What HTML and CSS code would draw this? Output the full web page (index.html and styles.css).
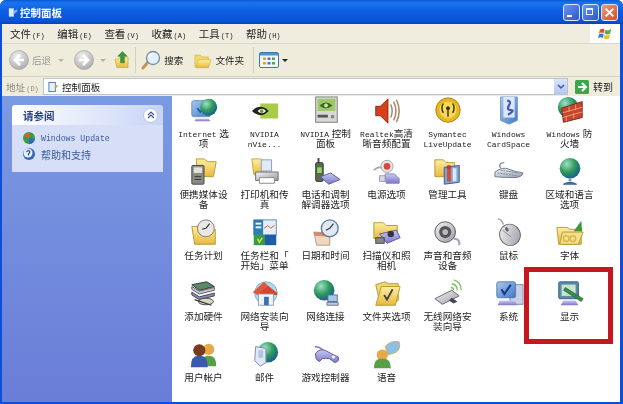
FILE: index.html
```html
<!DOCTYPE html>
<html lang="zh-CN">
<head>
    <meta charset="UTF-8">
    <meta name="viewport" content="width=device-width, initial-scale=1.0">
    <title>控制面板</title>
    <link rel="stylesheet" href="styles.css">
</head>
<body>
    <svg class="defs" width="0" height="0">
        <defs>
            <linearGradient id="gScreen" x1="0" y1="0" x2="1" y2="1"><stop offset="0" stop-color="#a9c9ee"/><stop offset="1" stop-color="#3f78c8"/></linearGradient>
            <linearGradient id="gFolder" x1="0" y1="0" x2="0" y2="1"><stop offset="0" stop-color="#fdeea0"/><stop offset="1" stop-color="#e8b93e"/></linearGradient>
            <radialGradient id="gGlobe" cx=".35" cy=".3" r=".8"><stop offset="0" stop-color="#9fe0c8"/><stop offset=".5" stop-color="#2f9a5a"/><stop offset="1" stop-color="#14509a"/></radialGradient>
            <linearGradient id="gGrey" x1="0" y1="0" x2="1" y2="1"><stop offset="0" stop-color="#f4f4f4"/><stop offset="1" stop-color="#9a9aa6"/></linearGradient>
            <linearGradient id="gPurple" x1="0" y1="0" x2="0" y2="1"><stop offset="0" stop-color="#c8c8f0"/><stop offset="1" stop-color="#7a78c8"/></linearGradient>
            <radialGradient id="gBack" cx=".4" cy=".3" r=".8"><stop offset="0" stop-color="#f0f0f0"/><stop offset="1" stop-color="#a6a6a6"/></radialGradient>
        </defs>
    </svg>

    <div class="window">
        <div class="titlebar">
            <svg class="title-icon" viewBox="0 0 12 12"><path d="M1 1h6v10H1z" fill="#dfe8f5"/><path d="M7 4l4-2v3l-4 3z" fill="#7fb0e8"/></svg>
            <span class="title-text">控制面板</span>
            <div class="caption">
                <div class="cap-btn cap-blue"><i class="cap-min"></i></div>
                <div class="cap-btn cap-blue"><i class="cap-max"></i></div>
                <div class="cap-btn cap-close">
                    <svg viewBox="0 0 10 10"><path d="M1.5 1.5l7 7M8.5 1.5l-7 7" stroke="#fff" stroke-width="1.8"/></svg>
                </div>
            </div>
        </div>

        <div class="menubar">
            <span class="menu-item">文件<span class="lat">(F)</span></span>
            <span class="menu-item">编辑<span class="lat">(E)</span></span>
            <span class="menu-item">查看<span class="lat">(V)</span></span>
            <span class="menu-item">收藏<span class="lat">(A)</span></span>
            <span class="menu-item">工具<span class="lat">(T)</span></span>
            <span class="menu-item">帮助<span class="lat">(H)</span></span>
            <div class="flag">
                <svg viewBox="0 0 16 16"><path d="M2 4q3-2 5 0l-1 4q-2-2-5 0z" fill="#d8502c"/><path d="M8 4q3 2 6-1l-1 5q-3 2-6 0z" fill="#62a83c"/><path d="M1 9q3-2 5 0l-1 4q-2-2-5 0z" fill="#3c78c8"/><path d="M7 9q3 2 6 0l-1 4q-3 2-6 0z" fill="#eebc2c"/></svg>
            </div>
        </div>

        <div class="toolbar">
            <svg class="nav-btn" viewBox="0 0 20 20"><circle cx="10" cy="10" r="9.5" fill="url(#gBack)" stroke="#9c9c9c" stroke-width=".6"/><path d="M11 5l-5 5 5 5M6 10h9" fill="none" stroke="#fff" stroke-width="2.6"/></svg>
            <span class="tool-text muted back-label">后退</span>
            <span class="drop grey first-drop"></span>
            <svg class="nav-btn forward" viewBox="0 0 20 20"><circle cx="10" cy="10" r="9.5" fill="url(#gBack)" stroke="#9c9c9c" stroke-width=".6"/><path d="M9 5l5 5-5 5M14 10H5" fill="none" stroke="#fff" stroke-width="2.6"/></svg>
            <span class="drop grey second-drop"></span>
            <svg class="up-btn" viewBox="0 0 16 20"><path d="M1 9h4l1-2h9v11H3z" fill="url(#gFolder)" stroke="#c09a30" stroke-width=".6"/><path d="M9 1l5 5h-3v7H7V6H4z" fill="#3a9a3a" stroke="#1f6f24" stroke-width=".5"/></svg>
            <span class="tool-sep"></span>
            <svg class="search-btn" viewBox="0 0 20 20"><path d="M7 12l-5 6" stroke="#c8925a" stroke-width="3" stroke-linecap="round"/><circle cx="12" cy="8" r="6.5" fill="#e4f1fb" stroke="#6c8fb0" stroke-width="1.3"/><path d="M8 7q1-3 4-3.500" stroke="#fff" stroke-width="1.4" fill="none"/></svg>
            <span class="tool-text search-label">搜索</span>
            <svg class="folder-btn" viewBox="0 0 20 18"><path d="M1 3h6l2 2h7v11H1z" fill="#f2d66e" stroke="#c8a83a" stroke-width=".6"/><path d="M5 8h14l-3 9H2z" fill="url(#gFolder)" stroke="#c8a83a" stroke-width=".6"/></svg>
            <span class="tool-text folder-label">文件夹</span>
            <span class="tool-sep sep-two"></span>
            <svg class="view-btn" viewBox="0 0 20 16"><rect x=".5" y=".5" width="19" height="15" rx="1.500" fill="#f4f6fa" stroke="#3d78a8"/><rect x="1" y="1" width="18" height="2.500" fill="#4f94c8"/><g fill="#e0a030"><rect x="4" y="5.500" width="3" height="2.500"/><rect x="4" y="10" width="3" height="2.500"/></g><g fill="#4a7ab8"><rect x="8.500" y="5.500" width="3" height="2.500"/><rect x="8.500" y="10" width="3" height="2.500"/></g><g fill="#58a048"><rect x="13" y="5.500" width="3" height="2.500"/><rect x="13" y="10" width="3" height="2.500"/></g></svg>
            <span class="drop"></span>
        </div>

        <div class="addressbar">
            <span class="addr-label">地址<span class="lat">(D)</span></span>
            <div class="addr-input">
                <svg class="addr-icon" viewBox="0 0 12 12"><rect x="1" y="1" width="7" height="10" fill="#e8f0fa" stroke="#3f78b8"/><path d="M8 3l3 2-3 3z" fill="#e0a030"/></svg>
                <span class="addr-text">控制面板</span>
                <div class="addr-drop"><svg viewBox="0 0 8 6"><path d="M1 1l3 3 3-3" fill="none" stroke="#3d5a9a" stroke-width="1.500"/></svg></div>
            </div>
            <svg class="go-icon" viewBox="0 0 14 14"><rect width="14" height="14" rx="1.500" fill="#3aa84a"/><path d="M3 7h7M7 3l4 4-4 4" fill="none" stroke="#fff" stroke-width="2"/></svg>
            <span class="go-text">转到</span>
        </div>

        <div class="main">
            <aside class="sidebar">
                <section class="task-box">
                    <header class="task-head">
                        <span>请参阅</span>
                        <span class="collapse">
                            <svg viewBox="0 0 8 8"><path d="M1 4l3-3 3 3M1 7l3-3 3 3" fill="none" stroke="#3a4f8a" stroke-width="1.100"/></svg>
                        </span>
                    </header>
                    <div class="task-body">
                        <div class="task-link">
                            <svg viewBox="0 0 14 14"><circle cx="7" cy="7" r="6" fill="#3c9a48"/><path d="M2 5q3-4 6-3l-1 5z" fill="#d8602c"/><path d="M7 7l6 1q-1 5-6 5z" fill="#2f6cc0"/></svg>
                            <span class="lat link-lat">Windows Update</span>
                        </div>
                        <div class="task-link">
                            <svg viewBox="0 0 14 14"><circle cx="7" cy="7" r="6" fill="#3566b8"/><circle cx="6" cy="6" r="4.500" fill="#e8eefa"/><path d="M4.500 5q1.500-2.500 3.200-.6Q8 6 6.500 7v1.500" fill="none" stroke="#2a4f9a" stroke-width="1.200"/></svg>
                            <span>帮助和支持</span>
                        </div>
                    </div>
                </section>
            </aside>

            <div class="content">
                <div class="item">
                    <svg viewBox="0 0 32 32"><rect x="3" y="5" width="20" height="17" rx="2" fill="url(#gScreen)" stroke="#6f8fb8"/><path d="M9 13l3 4 6-8" fill="none" stroke="#1f5aa0" stroke-width="2"/><circle cx="21" cy="12" r="9" fill="url(#gGlobe)"/><path d="M7 24h14l2 3H6z" fill="url(#gPurple)"/></svg>
                    <p><span class="lat">Internet</span> 选<br>项</p>
                </div>
                <div class="item">
                    <svg viewBox="0 0 32 32"><rect x="11" y="8" width="19" height="16" fill="#a8cc48"/><path d="M2 16q9-9 18 0-9 9-18 0z" fill="#222"/><path d="M8 16q5-5 9 0-4 5-9 0z" fill="#fff"/><circle cx="12.500" cy="16" r="2" fill="#6a9a28"/></svg>
                    <p><span class="lat">NVIDIA</span><br><span class="lat">nVie...</span></p>
                </div>
                <div class="item">
                    <svg viewBox="0 0 32 32"><rect x="5" y="1" width="23" height="27" fill="#d8d8d4" stroke="#7a7a78"/><rect x="7" y="3" width="19" height="13" fill="#9cc86a"/><path d="M9 10q7-6 14 0-7 6-14 0z" fill="#3a6a28"/><circle cx="16" cy="10" r="2" fill="#cfe8a0"/><rect x="7" y="20" width="11" height="3" fill="#555"/><circle cx="23" cy="22" r="2" fill="#888"/></svg>
                    <p><span class="lat">NVIDIA</span> 控制<br>面板</p>
                </div>
                <div class="item">
                    <svg viewBox="0 0 32 32"><path d="M4 11h5l8-8v26l-8-8H4z" fill="#d8401c" stroke="#8a2810"/><path d="M20 9q3 7 0 14M23 6q5 10 0 20M26 4q6 12 0 24" fill="none" stroke="#a88868" stroke-width="1.600"/></svg>
                    <p><span class="lat">Realtek</span>高清<br>晰音频配置</p>
                </div>
                <div class="item">
                    <svg viewBox="0 0 32 32"><circle cx="16" cy="15" r="13" fill="#e8b820" stroke="#a87c10"/><circle cx="16" cy="15" r="9" fill="#f4d860"/><circle cx="16" cy="13" r="2" fill="#3a3010"/><path d="M16 14v8M11 8q-3 5 0 10M21 8q3 5 0 10" fill="none" stroke="#3a3010" stroke-width="1.500"/></svg>
                    <p><span class="lat">Symantec</span><br><span class="lat">LiveUpdate</span></p>
                </div>
                <div class="item">
                    <svg viewBox="0 0 32 32"><path d="M7 1h18v25l-9 4-9-4z" fill="url(#gScreen)" stroke="#7a98c8"/><path d="M10 1h12v22H10z" fill="#dce8f8"/><path d="M14 5q5 0 2 5t2 5-3 5" fill="none" stroke="#4a5ab0" stroke-width="2.400"/></svg>
                    <p><span class="lat">Windows</span><br><span class="lat">CardSpace</span></p>
                </div>
                <div class="item">
                    <svg viewBox="0 0 32 32"><circle cx="14" cy="12" r="11" fill="url(#gGlobe)"/><path d="M7 13l22-7v17L9 28z" fill="#c8442a" stroke="#7a2414"/><path d="M8 18l21-6M8 23l21-6M15 11v6M22 9v6M12 21v6M20 18v6" stroke="#e8a080" fill="none"/></svg>
                    <p><span class="lat">Windows</span> 防<br>火墙</p>
                </div>

                <div class="item">
                    <svg viewBox="0 0 32 32"><path d="M8 2h8l4 3h9l-3 16H8z" fill="url(#gFolder)" stroke="#b89830"/><rect x="3" y="9" width="13" height="20" rx="1" fill="#8a8a86" stroke="#444"/><rect x="5" y="11" width="9" height="6" fill="#dfe8d8"/><path d="M6 21h7M6 24h7" stroke="#333"/></svg>
                    <p>便携媒体设<br>备</p>
                </div>
                <div class="item">
                    <svg viewBox="0 0 32 32"><path d="M2 2h10l3 3v14H4z" fill="url(#gFolder)" stroke="#c8a83a"/><path d="M12 3h11v12H12z" fill="#dfeaf6" stroke="#8a9ab8"/><path d="M6 16h24v9H6z" fill="url(#gGrey)" stroke="#6a6a72"/><path d="M10 22h16v6H10z" fill="#fff" stroke="#888"/></svg>
                    <p>打印机和传<br>真</p>
                </div>
                <div class="item">
                    <svg viewBox="0 0 32 32"><rect x="7" y="1" width="2" height="6" fill="#444"/><rect x="5" y="6" width="8" height="20" rx="1.500" fill="#5a6a4c" stroke="#333"/><rect x="6.500" y="11" width="5" height="6" fill="#8cd868"/><path d="M10 21l11-4 10 7-12 5z" fill="url(#gPurple)" stroke="#5a58a0"/></svg>
                    <p>电话和调制<br>解调器选项</p>
                </div>
                <div class="item">
                    <svg viewBox="0 0 32 32"><path d="M2 14q6-6 11 0" fill="none" stroke="#a8a8b8" stroke-width="2"/><circle cx="16" cy="10" r="6.500" fill="#e8e4e4" stroke="#a8a0a8"/><circle cx="16" cy="10" r="3.500" fill="#d84838"/><path d="M14 18h10l5 5v5H15z" fill="url(#gPurple)" stroke="#8888c0"/><path d="M8 20h6v6H8z" fill="#d8d8e8" stroke="#9898b0"/></svg>
                    <p>电源选项</p>
                </div>
                <div class="item">
                    <svg viewBox="0 0 32 32"><path d="M2 3h9l3 3h9v15H2z" fill="url(#gFolder)" stroke="#b89830"/><path d="M12 11l16-2v18l-16 2z" fill="#7ea4d0" stroke="#3a5a8a"/><rect x="15" y="13" width="4" height="13" fill="#d84a34"/><rect x="21" y="12" width="4" height="14" fill="#dce8f8"/><circle cx="17" cy="11" r="2.500" fill="#c83a28"/></svg>
                    <p>管理工具</p>
                </div>
                <div class="item">
                    <svg viewBox="0 0 32 32"><path d="M7 12q-3-6 4-6" fill="none" stroke="#808890" stroke-width="1.400"/><path d="M1 16q8-6 15-3t15 4q-1 5-10 5T1 21z" fill="url(#gGrey)" stroke="#6a7a90"/><path d="M4 17l20 3M7 14l19 3" stroke="#6a8ab0" stroke-dasharray="2 1" fill="none"/></svg>
                    <p>键盘</p>
                </div>
                <div class="item">
                    <svg viewBox="0 0 32 32"><circle cx="16" cy="12" r="11" fill="url(#gGlobe)"/><path d="M16 23v3" stroke="#7a98b8" stroke-width="3"/><path d="M9 29q7-4 14 0z" fill="#4a7ab8" stroke="#2a5a90"/></svg>
                    <p>区域和语言<br>选项</p>
                </div>

                <div class="item">
                    <svg viewBox="0 0 32 32"><path d="M3 9h10l3 3h12v16H6z" fill="url(#gFolder)" stroke="#b89830"/><circle cx="18" cy="11" r="9" fill="#e8e8e0" stroke="#7a7a78"/><path d="M18 11l4-5M18 11l-4 1" stroke="#333" stroke-width="1.200"/></svg>
                    <p>任务计划</p>
                </div>
                <div class="item">
                    <svg viewBox="0 0 32 32"><rect x="4" y="2" width="24" height="16" fill="#e4f0f8" stroke="#5a8ab0"/><rect x="4" y="2" width="10" height="16" fill="#2d7eb8"/><rect x="6" y="5" width="6" height="2" fill="#fff"/><rect x="6" y="9" width="6" height="2" fill="#fff"/><path d="M15 11l4-3 3 3 4-3" fill="none" stroke="#d84a34"/><rect x="4" y="18" width="12" height="11" fill="#3a9a48"/><rect x="16" y="18" width="12" height="11" fill="#1f5ca8"/><path d="M8 22l2 4 3-5" stroke="#d8e840" fill="none" stroke-width="1.500"/></svg>
                    <p>任务栏和「<br>开始」菜单</p>
                </div>
                <div class="item">
                    <svg viewBox="0 0 32 32"><path d="M3 15l17 1v13H6z" fill="#f0d8c0" stroke="#b89880"/><path d="M3 15l17 1v4L4 19z" fill="#d88868"/><circle cx="20" cy="11" r="9" fill="#dfe8f4" stroke="#5a7a9a" stroke-width="1.400"/><path d="M20 11l4-5M20 11l-4 2" stroke="#333" stroke-width="1.200"/></svg>
                    <p>日期和时间</p>
                </div>
                <div class="item">
                    <svg viewBox="0 0 32 32"><path d="M2 5h10l3 3h12v14H2z" fill="url(#gFolder)" stroke="#b89830"/><path d="M8 17l18-4 4 8-14 6z" fill="url(#gPurple)" stroke="#5a58a0"/><circle cx="20" cy="17" r="3.500" fill="#334"/><rect x="4" y="21" width="9" height="6" fill="#888" stroke="#444"/></svg>
                    <p>扫描仪和照<br>相机</p>
                </div>
                <div class="item">
                    <svg viewBox="0 0 32 32"><path d="M22 22q7 0 6 7" fill="none" stroke="#a0a8c8" stroke-width="2.400"/><circle cx="13" cy="15" r="11" fill="url(#gGrey)" stroke="#555"/><circle cx="13" cy="15" r="6.500" fill="#555"/><circle cx="13" cy="15" r="3" fill="#bbb"/></svg>
                    <p>声音和音频<br>设备</p>
                </div>
                <div class="item">
                    <svg viewBox="0 0 32 32"><path d="M4 1q4 0 6 6" fill="none" stroke="#9098a0" stroke-width="1.400"/><ellipse cx="17" cy="18" rx="11" ry="11.500" fill="url(#gGrey)" stroke="#666" transform="rotate(-25 17 18)"/><path d="M9 13l9 7" stroke="#888"/><rect x="12" y="10" width="3" height="5" rx="1.500" fill="#666" transform="rotate(-35 13 12)"/></svg>
                    <p>鼠标</p>
                </div>
                <div class="item">
                    <svg viewBox="0 0 32 32"><path d="M2 10h11l3 2h12v16H4z" fill="url(#gFolder)" stroke="#b89830"/><path d="M5 28l3-13h22l-5 13z" fill="#f4e08a" stroke="#b89830"/><path d="M20 14l8-11 1 11z" fill="#3a9a3a"/><circle cx="12" cy="22" r="3" fill="none" stroke="#d8b848" stroke-width="1.500"/><circle cx="19" cy="22" r="3" fill="none" stroke="#d8b848" stroke-width="1.500"/></svg>
                    <p>字体</p>
                </div>

                <div class="item">
                    <svg viewBox="0 0 32 32"><path d="M3 6l16-3 8 5-16 4z" fill="#5a8a6a" stroke="#333"/><path d="M3 8l8 5 16-4v3l-16 4-8-5z" fill="#c8c8d8" stroke="#555"/><path d="M3 14l8 5 16-4v3l-16 4-8-5z" fill="#8a88c0" stroke="#444"/><ellipse cx="18" cy="24" rx="8" ry="3.500" fill="#d8d8c0" stroke="#444"/><path d="M6 22l18 6" stroke="#333" stroke-width="1.400"/></svg>
                    <p>添加硬件</p>
                </div>
                <div class="item">
                    <svg viewBox="0 0 32 32"><circle cx="17" cy="15" r="12" fill="#9ad0e8" stroke="#6a9ab8" opacity=".8"/><path d="M9 15l10-8 10 8v2H9z" fill="#d8452c"/><path d="M3 14L15 3l4 4L8 17z" fill="#e0583c"/><path d="M9 16h16v12H9z" fill="#f0f4f8" stroke="#8aa0b8"/><rect x="15" y="19" width="5" height="9" fill="#3a70b0"/></svg>
                    <p>网络安装向<br>导</p>
                </div>
                <div class="item">
                    <svg viewBox="0 0 32 32"><circle cx="14" cy="12" r="11" fill="url(#gGlobe)"/><rect x="18" y="17" width="10" height="7" fill="#a8c8e8" stroke="#50709a"/><path d="M17 25h12v3H17z" fill="#c0c8e0" stroke="#6a7a9a"/></svg>
                    <p>网络连接</p>
                </div>
                <div class="item">
                    <svg viewBox="0 0 32 32"><path d="M4 6l10-3 3 2 11 0v18L9 28z" fill="#f0d870" stroke="#b89830"/><path d="M10 8h20l-5 20H4z" fill="url(#gFolder)" stroke="#b89830"/><path d="M13 17l3 5 6-11" fill="none" stroke="#444" stroke-width="2"/></svg>
                    <p>文件夹选项</p>
                </div>
                <div class="item">
                    <svg viewBox="0 0 32 32"><path d="M2 21l18-9 8 6-18 9z" fill="url(#gGrey)" stroke="#666"/><path d="M20 20l6 4-4 2-5-3z" fill="#445"/><path d="M19 9q3 0 3 3M20 5q6 1 6 7M22 1q8 2 8 11" fill="none" stroke="#7cc060" stroke-width="1.500"/></svg>
                    <p>无线网络安<br>装向导</p>
                </div>
                <div class="item">
                    <svg viewBox="0 0 32 32"><rect x="17" y="6" width="14" height="21" fill="#c8d0e8" stroke="#7a88a8"/><rect x="3" y="3" width="20" height="17" rx="2" fill="url(#gScreen)" stroke="#5a7aa8"/><path d="M8 11l3 5 7-10" fill="none" stroke="#163a88" stroke-width="2.200"/><path d="M6 23h16l3 5H4z" fill="url(#gPurple)"/></svg>
                    <p>系统</p>
                </div>
                <div class="item">
                    <svg viewBox="0 0 32 32"><rect x="4" y="3" width="21" height="18" rx="1.500" fill="#5a8aa8" stroke="#3a6078"/><rect x="7" y="6" width="15" height="12" fill="#c8e4d0"/><path d="M11 9l19 12-2 3L9 12z" fill="#3a8a48" stroke="#1f5a28" stroke-width=".6"/><path d="M9 23h13l3 5H6z" fill="url(#gPurple)"/></svg>
                    <p>显示</p>
                </div>

                <div class="item">
                    <svg viewBox="0 0 32 32"><circle cx="21" cy="10" r="6" fill="#e8a848"/><path d="M13 28q0-12 8-11 8-1 8 11z" fill="#58a048"/><circle cx="11" cy="11" r="6.500" fill="#7a3a20"/><path d="M2 29q0-13 9-12 9-1 9 12z" fill="#3a5ab0"/></svg>
                    <p>用户帐户</p>
                </div>
                <div class="item">
                    <svg viewBox="0 0 32 32"><circle cx="19" cy="13" r="11" fill="url(#gGlobe)"/><path d="M6 7l11 2v15l-6 4-6-6z" fill="#dfe8f8" stroke="#7a8ab0"/><path d="M9 11h5v8H9z" fill="#b0c4e0"/></svg>
                    <p>邮件</p>
                </div>
                <div class="item">
                    <svg viewBox="0 0 32 32"><path d="M4 7q5 0 9 4" fill="none" stroke="#8a88b8" stroke-width="2"/><path d="M5 14q5-6 12-2t12 6q2 5-4 6l-5-4q-5-1-8 0l-3 3q-5-2-4-9z" fill="url(#gPurple)" stroke="#5a58a0"/><circle cx="24" cy="18" r="1.600" fill="#fff"/></svg>
                    <p>游戏控制器</p>
                </div>
                <div class="item">
                    <svg viewBox="0 0 32 32"><path d="M14 7q6-7 15-5 2 7-3 11l-9 3-1-3z" fill="#88c0e8" stroke="#d8b040"/><circle cx="11" cy="16" r="6" fill="#e8a848"/><path d="M2 30q0-11 9-10 9-1 9 10z" fill="#58a048"/></svg>
                    <p>语音</p>
                </div>
            </div>
            <div class="highlight"></div>
        </div>
    </div>
</body>
</html>
```

FILE: styles.css
```css
html, body {
    margin: 0;
    padding: 0;
}
body {
    width: 623px;
    height: 404px;
    overflow: hidden;
    background-color: #fff;
    font-family: "Noto Sans CJK SC", sans-serif;
    font-size: 10px;
    color: #222;
}
.defs {
    display: block;
}
.lat {
    font-family: "Liberation Mono", monospace;
    font-size: 8px;
    line-height: 0;
}

/* window frame */
.window {
    width: 623px;
    height: 404px;
    box-sizing: border-box;
    display: flex;
    flex-direction: column;
    padding: 0 3px 2px 2px;
    background-color: #0a50d8;
    border-radius: 6px 6px 0 0;
    filter: blur(0.4px);
}
.titlebar {
    height: 24px;
    margin: 0 -3px 0 -2px;
    padding: 1px 5px 0 8px;
    box-sizing: border-box;
    display: flex;
    align-items: center;
    background: linear-gradient(#0a58d8, #1a74ec 12%, #0b5be0 50%, #0a54d8 85%, #0444c0);
    border-radius: 6px 6px 0 0;
}
.title-icon {
    width: 10px;
    height: 11px;
    margin-right: 2px;
}
.title-text {
    color: #fff;
    font-weight: bold;
    font-size: 10.5px;
}
.caption {
    margin-left: auto;
    display: flex;
    gap: 2px;
}
.cap-btn {
    width: 17px;
    height: 17px;
    box-sizing: border-box;
    border: 1px solid #dfe8fa;
    border-radius: 3px;
    position: relative;
}
.cap-blue {
    background: linear-gradient(135deg, #6c94ee, #2a58cc);
}
.cap-close {
    background: linear-gradient(135deg, #ee9a78, #d0502c);
}
.cap-close svg {
    display: block;
    width: 11px;
    height: 11px;
    margin: 2px;
}
.cap-min {
    position: absolute;
    left: 3px;
    bottom: 3px;
    width: 5px;
    height: 2px;
    background-color: #fff;
}
.cap-max {
    position: absolute;
    left: 3px;
    top: 3px;
    width: 7px;
    height: 7px;
    box-sizing: border-box;
    border: 1px solid #e8f0fc;
    border-top-width: 2px;
}

/* menu */
.menubar {
    height: 20px;
    display: flex;
    align-items: center;
    padding-left: 8px;
    background-color: #f0ede0;
    border-bottom: 1px solid #dcd8c8;
    box-sizing: border-box;
}
.menu-item {
    width: 47.2px;
    flex: none;
    font-size: 10.5px;
}
.menu-item .lat {
    font-size: 7px;
    margin-left: 1px;
}
.flag {
    margin-left: auto;
    width: 30px;
    height: 19px;
    background-color: #fff;
    display: flex;
    align-items: center;
    justify-content: center;
}
.flag svg {
    width: 15px;
    height: 15px;
}

/* toolbar */
.toolbar {
    height: 33px;
    display: flex;
    align-items: center;
    padding-left: 7px;
    background-color: #efecdc;
    border-bottom: 1px solid #d4d0c0;
    box-sizing: border-box;
}
.nav-btn {
    width: 20px;
    height: 20px;
    flex: none;
}
.forward {
    margin-left: 10px;
}
.tool-text {
    flex: none;
    font-size: 9.6px;
}
.muted {
    color: #9a9a94;
}
.back-label {
    margin-left: 3px;
}
.drop {
    width: 0;
    height: 0;
    flex: none;
    margin-left: 3px;
    border: 3px solid transparent;
    border-top: 3px solid #222;
    border-bottom: 0;
}
.drop.grey {
    border-top-color: #b4b4ac;
}
.first-drop {
    margin-left: 7px;
}
.second-drop {
    margin-left: 6px;
}
.up-btn {
    width: 15px;
    height: 20px;
    flex: none;
    margin-left: 8px;
}
.tool-sep {
    width: 1px;
    height: 26px;
    flex: none;
    margin: 0 5px 0 6px;
    background-color: #d4d0bc;
}
.search-btn {
    width: 20px;
    height: 20px;
    flex: none;
}
.search-label {
    margin-left: 3px;
}
.folder-btn {
    width: 18px;
    height: 17px;
    flex: none;
    margin-left: 11px;
}
.folder-label {
    margin-left: 3px;
}
.sep-two {
    margin-left: 9px;
}
.view-btn {
    width: 20px;
    height: 16px;
    flex: none;
}

/* address */
.addressbar {
    height: 19px;
    display: flex;
    align-items: center;
    padding-left: 4px;
    background-color: #efecdc;
    box-sizing: border-box;
}
.addr-label {
    width: 37px;
    color: #8a8a84;
    flex: none;
    font-size: 9.6px;
}
.addr-label .lat {
    font-size: 7px;
    margin-left: 1px;
}
.addr-input {
    width: 525px;
    height: 17px;
    flex: none;
    box-sizing: border-box;
    display: flex;
    align-items: center;
    padding-left: 4px;
    background-color: #fff;
    border: 1px solid #b8c4d0;
    font-size: 9.6px;
}
.addr-icon {
    width: 11px;
    height: 12px;
    margin-right: 3px;
}
.addr-drop {
    margin-left: auto;
    width: 13px;
    height: 15px;
    display: flex;
    align-items: center;
    justify-content: center;
    background: linear-gradient(#d8e4fa, #b4c8f0);
}
.addr-drop svg {
    width: 8px;
    height: 6px;
}
.go-icon {
    width: 14px;
    height: 14px;
    flex: none;
    margin-left: 7px;
}
.go-text {
    margin-left: 4px;
    flex: none;
}

/* main area */
.main {
    flex: 1;
    display: flex;
    position: relative;
    min-height: 0;
    background-color: #fff;
}
.sidebar {
    width: 170px;
    flex: none;
    box-sizing: border-box;
    padding: 9px 9px 0 10px;
    background: linear-gradient(#7a9ae2, #6a7dd8);
}
.task-head {
    height: 20px;
    display: flex;
    align-items: center;
    justify-content: space-between;
    padding: 0 5px 0 11px;
    border-radius: 3px 3px 0 0;
    background: linear-gradient(90deg, #fff, #c8d4f6);
    color: #25408a;
    font-weight: bold;
    font-size: 10.5px;
}
.collapse {
    width: 13px;
    height: 13px;
    border-radius: 50%;
    background-color: #fff;
    border: 1px solid #b8c4e4;
    display: flex;
    align-items: center;
    justify-content: center;
}
.collapse svg {
    width: 8px;
    height: 8px;
}
.task-body {
    height: 47px;
    box-sizing: border-box;
    padding: 5px 0 0 10px;
    background-color: #d6dff7;
}
.task-link {
    height: 16px;
    display: flex;
    align-items: center;
    gap: 5px;
    color: #3a5a9a;
}
.task-link svg {
    width: 14px;
    height: 14px;
    flex: none;
}
.link-lat {
    font-size: 8.2px;
    line-height: normal;
}

/* icons */
.content {
    flex: 1;
    display: grid;
    grid-template-columns: repeat(7, 61px);
    grid-auto-rows: 61px;
    padding-left: 1px;
    align-content: start;
}
.item {
    text-align: center;
}
.item svg {
    display: block;
    width: 30px;
    height: 30px;
    margin: 0 auto 3px;
}
.item p {
    margin: 0;
    font-family: "Liberation Sans", "Noto Sans CJK SC", sans-serif;
    font-size: 9.6px;
    line-height: 10px;
    white-space: nowrap;
}
.highlight {
    position: absolute;
    left: 522px;
    top: 171px;
    width: 89px;
    height: 77px;
    box-sizing: border-box;
    border: 5px solid #c8161e;
}
```
